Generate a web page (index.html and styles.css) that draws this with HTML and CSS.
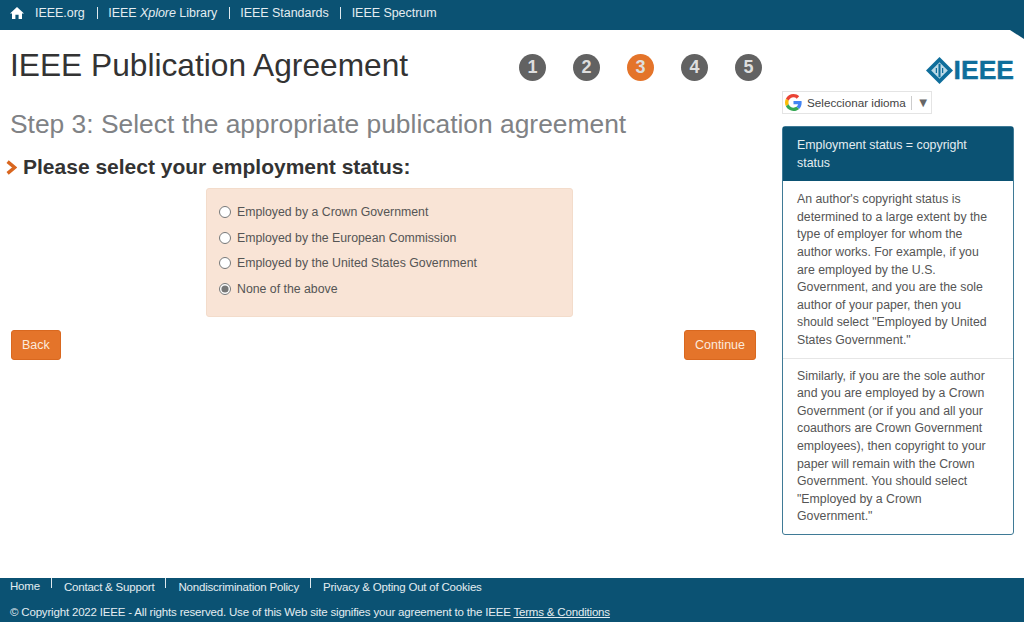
FILE: index.html
```html
<!DOCTYPE html>
<html lang="en">
<head>
<meta charset="utf-8">
<title>IEEE Publication Agreement</title>
<link rel="stylesheet" href="styles.css">
</head>
<body>
<nav class="topbar">
  <svg class="home" viewBox="0 0 14 12" width="14" height="12" aria-hidden="true"><path d="M7 0 L14 6.400 H12 V12 H8.600 V7.800 H5.400 V12 H2 V6.400 H0 Z" fill="#fff"/></svg>
  <a class="top-link first">IEEE.org</a>
  <a class="top-link">IEEE <i>Xplore</i> Library</a>
  <a class="top-link">IEEE Standards</a>
  <a class="top-link">IEEE Spectrum</a>
</nav>
<div class="notch"></div>
<div class="page">
  <main class="content">
    <header class="title-row">
      <h1>IEEE Publication Agreement</h1>
      <ol class="steps">
        <li>1</li><li>2</li><li class="current">3</li><li>4</li><li>5</li>
      </ol>
    </header>
    <h2>Step 3: Select the appropriate publication agreement</h2>
    <h3><svg class="chev" viewBox="0 0 11 15" width="11" height="15" aria-hidden="true"><path d="M1.600 1.600 L8.600 7.500 L1.600 13.400" fill="none" stroke="#d9661f" stroke-width="3.400"/></svg>Please select your employment status:</h3>
    <form class="options">
      <label><input type="radio" name="e">Employed by a Crown Government</label>
      <label><input type="radio" name="e">Employed by the European Commission</label>
      <label><input type="radio" name="e">Employed by the United States Government</label>
      <label><input type="radio" name="e" checked>None of the above</label>
    </form>
    <div class="actions">
      <button type="button">Back</button>
      <button type="button">Continue</button>
    </div>
  </main>
  <aside class="side">
    <div class="logo">
      <svg viewBox="0 0 26 26" width="27" height="27" aria-hidden="true">
        <path d="M13 0 L26 13 L13 26 L0 13 Z" fill="#0f6e9b"/>
        <path d="M13 5 L21 13 L13 21 L5 13 Z" fill="#bcd9e6"/>
        <path d="M13 6.500 V19.500" stroke="#0f6e9b" stroke-width="2"/>
        <path d="M10 10.500 V15.500 M16 10.500 V15.500" stroke="#0f6e9b" stroke-width="1.200"/>
      </svg>
      <span>IEEE</span>
    </div>
    <div class="translate">
      <svg viewBox="0 0 48 48" width="17" height="17" aria-hidden="true">
        <path fill="#EA4335" d="M24 9.500c3.500 0 6.700 1.200 9.200 3.600l6.900-6.900C35.900 2.400 30.500 0 24 0 14.600 0 6.500 5.400 2.600 13.200l8 6.200C12.500 13.700 17.800 9.500 24 9.500z"/>
        <path fill="#4285F4" d="M47 24.500c0-1.600-.2-3.100-.4-4.500H24v9h12.900c-.6 3-2.200 5.500-4.700 7.200l7.700 6C44.400 38 47 31.800 47 24.500z"/>
        <path fill="#FBBC05" d="M10.600 28.600c-.5-1.400-.8-3-.8-4.600s.3-3.200.8-4.600l-8-6.200C.9 16.500 0 20.100 0 24s.9 7.500 2.600 10.800l8-6.200z"/>
        <path fill="#34A853" d="M24 48c6.500 0 11.900-2.100 15.900-5.800l-7.700-6c-2.200 1.400-4.900 2.300-8.200 2.300-6.200 0-11.500-4.200-13.400-9.900l-8 6.200C6.500 42.600 14.600 48 24 48z"/>
      </svg>
      <span class="lang">Seleccionar idioma</span>
      <span class="caret">▼</span>
    </div>
    <section class="panel">
      <h4>Employment status = copyright status</h4>
      <p>An author's copyright status is determined to a large extent by the type of employer for whom the author works. For example, if you are employed by the U.S. Government, and you are the sole author of your paper, then you should select "Employed by United States Government."</p>
      <p class="second">Similarly, if you are the sole author and you are employed by a Crown Government (or if you and all your coauthors are Crown Government employees), then copyright to your paper will remain with the Crown Government. You should select "Employed by a Crown Government."</p>
    </section>
  </aside>
</div>
<footer class="footer">
  <div class="foot-links">
    <a>Home</a><a>Contact &amp; Support</a><a>Nondiscrimination Policy</a><a>Privacy &amp; Opting Out of Cookies</a>
  </div>
  <p>© Copyright 2022 IEEE - All rights reserved. Use of this Web site signifies your agreement to the IEEE <a class="terms">Terms &amp; Conditions</a></p>
</footer>
</body>
</html>
```
FILE: styles.css
```css
* { box-sizing: border-box; }
html, body { margin: 0; height: 622px; overflow: hidden; }
body {
  display: flex;
  flex-direction: column;
  position: relative;
  font-family: "Liberation Sans", Arial, sans-serif;
  background: #fff;
  color: #444;
}
.topbar {
  flex: 0 0 30px;
  display: flex;
  align-items: center;
  padding: 0 0 5px 10px;
  background: #0b5273;
  color: #e4edf1;
  font-size: 12.500px;
  letter-spacing: -0.040px;
}
.home { margin-right: 11px; }
.top-link { padding: 0 11.500px 0 10.500px; border-left: 1px solid #dfe9ee; line-height: 12px; }
.top-link.first { border-left: 0; padding-left: 0; padding-right: 12px; }
.notch {
  position: absolute;
  top: 30px;
  right: 0;
  width: 0;
  height: 0;
  border-top: 9px solid #0b5273;
  border-left: 14px solid transparent;
}
.page { flex: 1; display: flex; padding: 0 10px; gap: 26px; }
.content { width: 746px; }
.title-row { display: flex; justify-content: space-between; height: 64px; padding-top: 17px; }
h1 { margin: 0; font-size: 31.700px; line-height: 36px; font-weight: 400; color: #333; }
.steps {
  display: flex;
  gap: 27px;
  margin: 7px 0 0;
  padding: 0;
  list-style: none;
  transform: translateX(6px);
}
.steps li {
  width: 27px;
  height: 27px;
  border-radius: 50%;
  background: #626262;
  color: #dedede;
  font-size: 18px;
  line-height: 27px;
  font-weight: 700;
  text-align: center;
}
.steps li.current { background: #e4742a; }
h2 { margin: 14px 0 0; font-size: 26.400px; line-height: 32px; font-weight: 400; color: #808285; }
h3 {
  display: flex;
  align-items: center;
  margin: 15px 0 0 -4px;
  font-size: 21px;
  line-height: 24px;
  font-weight: 700;
  color: #333;
}
.chev { margin-right: 6px; }
.options {
  display: flex;
  flex-direction: column;
  justify-content: center;
  width: 367px;
  height: 129px;
  margin: 9px 0 0 196px;
  padding: 0 12px 4px;
  gap: 8.500px;
  background: #f9e4d6;
  border: 1px solid #f3dccb;
  border-radius: 3px;
  font-size: 12.300px;
}
.options label { display: flex; align-items: center; height: 17px; color: #555; }
.options input { width: 12px; height: 12px; margin: 0 6px 0 0; accent-color: #777; }
.actions { display: flex; justify-content: space-between; margin-top: 13px; padding-left: 1px; }
button {
  height: 30px;
  padding: 0 10px;
  border: 1px solid #d9681f;
  border-radius: 3px;
  background: #e4742a;
  color: #fbeadd;
  font: 12.500px "Liberation Sans", Arial, sans-serif;
}
.side { width: 232px; display: flex; flex-direction: column; }
.logo {
  display: flex;
  align-items: center;
  justify-content: flex-end;
  gap: 1px;
  height: 27px;
  margin-top: 27px;
  color: #0f6e9b;
  font-size: 26.500px;
  line-height: 27px;
  font-weight: 700;
  -webkit-text-stroke: 0.4px #0f6e9b;
}
.translate {
  display: flex;
  align-items: center;
  width: 150px;
  height: 23px;
  margin-top: 7px;
  padding-left: 2px;
  border: 1px solid #e4e4e4;
  font-size: 11.700px;
  color: #444;
}
.lang { margin-left: 5px; padding-right: 5px; border-right: 1px solid #ccc; line-height: 14px; }
.caret { margin-left: 5px; font-size: 13px; color: #666; }
.panel {
  margin-top: 12px;
  border: 1px solid #3f7a96;
  border-radius: 3px;
  font-size: 12.300px;
  line-height: 17.600px;
  color: #555;
}
.panel h4 {
  margin: 0;
  padding: 10px 14px 9px;
  background: #0b5273;
  color: #e4edf1;
  font-size: 12.400px;
  line-height: 17.600px;
  font-weight: 400;
}
.panel p { margin: 0; padding: 10px 16px 8px 14px; }
.panel .second { padding-top: 9px; border-top: 1px solid #e6e6e6; }
.footer {
  flex: 0 0 44px;
  padding: 0 10px;
  background: #0b5273;
  color: #e4edf1;
  font-size: 11.500px;
}
.foot-links { display: flex; height: 16px; align-items: center; }
.foot-links a { line-height: 14px; letter-spacing: -0.200px; }
.foot-links a + a { margin-left: 11px; }
.foot-links a + a::before {
  content: "";
  display: inline-block;
  width: 1px;
  height: 10px;
  margin-right: 12px;
  vertical-align: 3px;
  background: #dfe9ee;
}
.footer p { margin: 11px 0 0; line-height: 14px; letter-spacing: -0.180px; }
.terms { text-decoration: underline; }
```
